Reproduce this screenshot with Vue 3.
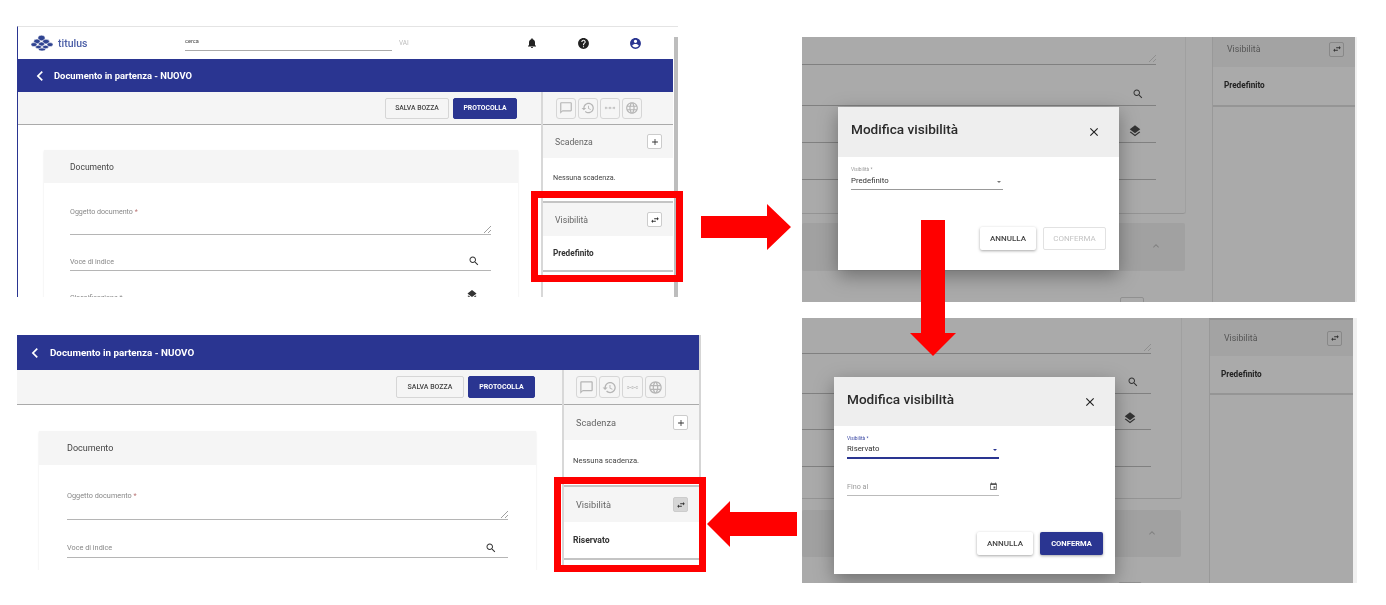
<template>
  <main class="slide">
    <!-- page screenshots, before and after -->
    <section v-for="s in appShots" :key="s.id" class="shot app" :class="s.id">
      <header v-if="s.topbar" class="topbar">
        <svg class="logo" viewBox="0 0 22 16" width="22" height="16" aria-hidden="true">
          <ellipse cx="10.5" cy="3" rx="3.6" ry="2.8" />
          <ellipse cx="6" cy="6.4" rx="3.2" ry="2.3" />
          <ellipse cx="15" cy="6.6" rx="3.4" ry="2.3" />
          <ellipse cx="3" cy="9.6" rx="3" ry="2" />
          <ellipse cx="10.5" cy="9" rx="3" ry="2" />
          <ellipse cx="19" cy="9.6" rx="3" ry="2" />
          <ellipse cx="7.5" cy="12" rx="3" ry="1.7" />
          <ellipse cx="14.5" cy="12" rx="3" ry="1.7" />
          <ellipse cx="11" cy="14.5" rx="3.4" ry="1.4" />
        </svg>
        <span class="brand">titulus</span>
        <div class="search">cerca</div>
        <span class="go">VAI</span>
        <div class="top-icons">
          <Icon name="bell" :size="12" />
          <Icon name="help" :size="13" />
          <Icon name="account" :size="13" class="blue" />
        </div>
      </header>

      <div class="title-bar">
        <Icon name="back" :size="20" />
        <span>Documento in partenza - NUOVO</span>
      </div>

      <div class="columns">
        <div class="content">
          <div class="toolbar">
            <button class="btn">SALVA BOZZA</button>
            <button class="btn primary">PROTOCOLLA</button>
          </div>
          <div class="card">
            <div class="card-head">Documento</div>
            <div class="field tall">
              <label>Oggetto documento <i>*</i></label>
              <svg class="grip" viewBox="0 0 8 8" width="8" height="8" aria-hidden="true">
                <path d="M1 8 8 1M5 8l3-3" />
              </svg>
            </div>
            <div class="field">
              <label>Voce di indice</label>
              <Icon name="search" :size="12" />
            </div>
            <div v-if="s.topbar" class="field clipped">
              <label>Classificazione *</label>
              <Icon name="layers" :size="12" />
            </div>
          </div>
        </div>

        <aside class="side">
          <div class="side-tools">
            <span v-for="t in sideTools" :key="t" class="tool"><Icon :name="t" :size="s.toolIcon" /></span>
          </div>
          <div class="acc-head">
            <span>Scadenza</span>
            <span class="mini"><Icon name="add" :size="10" /></span>
          </div>
          <div class="acc-body first">Nessuna scadenza.</div>
          <div class="acc-head">
            <span>Visibilità</span>
            <span class="mini" :class="{ pressed: s.pressed }"><Icon name="swap" :size="10" /></span>
          </div>
          <div class="acc-body value">{{ s.value }}</div>
        </aside>
      </div>
    </section>

    <!-- dialog screenshots -->
    <section v-for="s in dialogShots" :key="s.id" class="shot dim" :class="s.id">
      <div class="under">
        <div class="under-main">
          <div class="rows">
            <div class="row">
              <svg class="grip" viewBox="0 0 8 8" width="8" height="8" aria-hidden="true">
                <path d="M1 8 8 1M5 8l3-3" />
              </svg>
            </div>
            <div class="row"><Icon name="search" :size="12" /></div>
            <div class="row stack"><Icon name="layers" :size="14" /></div>
            <div class="row"></div>
          </div>
          <div class="under-head"><Icon name="up" :size="12" /></div>
          <span class="under-mini"></span>
        </div>
        <div class="under-side">
          <div class="acc-head">
            <span>Visibilità</span>
            <span class="mini"><Icon name="swap" :size="10" /></span>
          </div>
          <div class="acc-body value">Predefinito</div>
        </div>
      </div>

      <div class="modal">
        <div class="modal-head">
          <h2>Modifica visibilità</h2>
          <Icon name="close" :size="14" />
        </div>
        <div class="modal-body">
          <div class="select" :class="{ active: s.active }">
            <label>Visibilità *</label>
            <div class="select-value">
              <span>{{ s.value }}</span>
              <span class="caret"></span>
            </div>
          </div>
          <div v-if="s.active" class="date">
            <span>Fino al</span>
            <Icon name="event" :size="9" />
          </div>
        </div>
        <div class="modal-foot">
          <button class="flat">ANNULLA</button>
          <button class="flat" :class="s.active ? 'confirm' : 'off'">CONFERMA</button>
        </div>
      </div>
    </section>

    <!-- annotations drawn over the screenshots -->
    <div class="mark mark-a"></div>
    <div class="mark mark-d"></div>
    <svg class="arrow arrow-right" viewBox="0 0 90 46" width="90" height="46" aria-hidden="true">
      <polygon points="0,12 66,12 66,0 90,23 66,46 66,34 0,34" />
    </svg>
    <svg class="arrow arrow-down" viewBox="0 0 46 136" width="46" height="136" aria-hidden="true">
      <polygon points="11,0 35,0 35,113 46,113 23,136 0,113 11,113" />
    </svg>
    <svg class="arrow arrow-left" viewBox="0 0 90 46" width="90" height="46" aria-hidden="true">
      <polygon points="90,11 23,11 23,0 0,23 23,46 23,35 90,35" />
    </svg>
  </main>
</template>

<script setup>
import { h } from 'vue';

const icons = {
  bell: 'M12 22c1.1 0 2-.9 2-2h-4c0 1.1.9 2 2 2zm6-6v-5c0-3.07-1.63-5.64-4.5-6.32V4c0-.83-.67-1.5-1.5-1.5s-1.5.67-1.5 1.5v.68C7.64 5.36 6 7.92 6 11v5l-2 2v1h16v-1l-2-2z',
  help: 'M12 2C6.48 2 2 6.48 2 12s4.48 10 10 10 10-4.48 10-10S17.52 2 12 2zm1 17h-2v-2h2v2zm2.07-7.75l-.9.92C13.45 12.9 13 13.5 13 15h-2v-.5c0-1.1.45-2.1 1.17-2.83l1.24-1.26c.37-.36.59-.86.59-1.41 0-1.1-.9-2-2-2s-2 .9-2 2H8c0-2.21 1.79-4 4-4s4 1.79 4 4c0 .88-.36 1.68-.93 2.25z',
  account: 'M12 2C6.48 2 2 6.48 2 12s4.48 10 10 10 10-4.48 10-10S17.52 2 12 2zm0 3c1.66 0 3 1.34 3 3s-1.34 3-3 3-3-1.34-3-3 1.34-3 3-3zm0 14.2c-2.5 0-4.71-1.28-6-3.22.03-1.99 4-3.08 6-3.08 1.99 0 5.97 1.09 6 3.08-1.29 1.94-3.5 3.22-6 3.22z',
  back: 'M15.41 7.41L14 6l-6 6 6 6 1.41-1.41L10.83 12z',
  search: 'M15.5 14h-.79l-.28-.27C15.41 12.59 16 11.11 16 9.5 16 5.91 13.09 3 9.5 3S3 5.91 3 9.5 5.91 16 9.5 16c1.61 0 3.09-.59 4.23-1.57l.27.28v.79l5 4.99L20.49 19l-4.99-5zm-6 0C7.01 14 5 11.99 5 9.5S7.01 5 9.5 5 14 7.01 14 9.5 11.99 14 9.5 14z',
  layers: 'M11.99 18.54l-7.37-5.73L3 14.07l9 7 9-7-1.63-1.27-7.38 5.74zM12 16l7.36-5.73L21 9l-9-7-9 7 1.63 1.27L12 16z',
  close: 'M19 6.41L17.59 5 12 10.59 6.41 5 5 6.41 10.59 12 5 17.59 6.41 19 12 13.41 17.59 19 19 17.59 13.41 12z',
  up: 'M12 8l-6 6 1.41 1.41L12 10.83l4.59 4.58L18 14z',
  add: 'M19 13h-6v6h-2v-6H5v-2h6V5h2v6h6v2z',
  swap: 'M6.99 11L3 15l3.99 4v-3H14v-2H6.99v-3zM21 9l-3.99-4v3H10v2h7.01v3L21 9z',
  chat: 'M20 2H4c-1.1 0-2 .9-2 2v18l4-4h14c1.1 0 2-.9 2-2V4c0-1.1-.9-2-2-2zm0 14H6l-2 2V4h16v12z',
  history: 'M13 3c-4.97 0-9 4.03-9 9H1l3.89 3.89.07.14L9 12H6c0-3.87 3.13-7 7-7s7 3.13 7 7-3.13 7-7 7c-1.93 0-3.68-.79-4.94-2.06l-1.42 1.42C8.27 19.99 10.51 21 13 21c4.97 0 9-4.03 9-9s-4.03-9-9-9zm-1 5v5l4.28 2.54.72-1.21-3.5-2.08V8H12z',
  dots: 'M3 11.4h18v1.2H3zM5 10a2 2 0 1 0 0 4 2 2 0 0 0 0-4zm7 0a2 2 0 1 0 0 4 2 2 0 0 0 0-4zm7 0a2 2 0 1 0 0 4 2 2 0 0 0 0-4z',
  globe: 'M11.99 2C6.47 2 2 6.48 2 12s4.47 10 9.99 10C17.52 22 22 17.52 22 12S17.52 2 11.99 2zm6.93 6h-2.95c-.32-1.25-.78-2.45-1.38-3.56 1.84.63 3.37 1.91 4.33 3.56zM12 4.04c.83 1.2 1.48 2.53 1.91 3.96h-3.82c.43-1.43 1.08-2.76 1.91-3.96zM4.26 14C4.1 13.36 4 12.69 4 12s.1-1.36.26-2h3.38c-.08.66-.14 1.32-.14 2 0 .68.06 1.34.14 2H4.26zm.82 2h2.95c.32 1.25.78 2.45 1.38 3.56-1.84-.63-3.37-1.9-4.33-3.56zm2.95-8H5.08c.96-1.66 2.49-2.93 4.33-3.56C8.81 5.55 8.35 6.75 8.03 8zM12 19.96c-.83-1.2-1.48-2.53-1.91-3.96h3.82c-.43 1.43-1.08 2.76-1.91 3.96zM14.34 14H9.66c-.09-.66-.16-1.32-.16-2 0-.68.07-1.35.16-2h4.68c.09.65.16 1.32.16 2 0 .68-.07 1.34-.16 2zm.25 5.56c.6-1.11 1.06-2.31 1.38-3.56h2.95c-.96 1.65-2.49 2.93-4.33 3.56zM16.36 14c.08-.66.14-1.32.14-2 0-.68-.06-1.34-.14-2h3.38c.16.64.26 1.31.26 2s-.1 1.36-.26 2h-3.38z',
  event: 'M17 12h-5v5h5v-5zM16 1v2H8V1H6v2H5c-1.11 0-1.99.9-1.99 2L3 19c0 1.1.89 2 2 2h14c1.1 0 2-.9 2-2V5c0-1.1-.9-2-2-2h-1V1h-2zm3 18H5V8h14v11z'
};

const Icon = (props) =>
  h('svg', { viewBox: '0 0 24 24', width: props.size, height: props.size, fill: 'currentColor', 'aria-hidden': 'true' }, [
    h('path', { d: icons[props.name] })
  ]);
Icon.props = ['name', 'size'];

const sideTools = ['chat', 'history', 'dots', 'globe'];

const appShots = [
  { id: 'shot-a', topbar: true, value: 'Predefinito', pressed: false, toolIcon: 14 },
  { id: 'shot-d', topbar: false, value: 'Riservato', pressed: true, toolIcon: 15 }
];

const dialogShots = [
  { id: 'shot-b', value: 'Predefinito', active: false },
  { id: 'shot-c', value: 'Riservato', active: true }
];
</script>

<style scoped>
.slide {
  position: relative;
  width: 1386px;
  height: 605px;
  overflow: hidden;
  background: #fff;
  font-family: Roboto, "Liberation Sans", sans-serif;
  color: #333;
}

/* the pasted screenshots sit freely on the slide */
.shot {
  position: absolute;
  overflow: hidden;
  filter: blur(0.3px);
  box-sizing: border-box;
}

button {
  font-family: inherit;
  padding: 0;
  cursor: pointer;
}

label {
  display: block;
}

/* page screenshots */
.app {
  display: flex;
  flex-direction: column;
  background: #fff;
}

.shot-a {
  left: 17px;
  top: 26px;
  width: 661px;
  height: 271px;
  padding-right: 5px;
  border-top: 1px solid #e4e4e4;
  border-left: 1px solid #2a3591;
  --bar: 33px;
  --tool: 33px;
  --title: 9.4px;
  --title-gap: 4px;
  --title-pad: 12px;
  --content: 523px;
  --btn-h: 21px;
  --btn-a: 64px;
  --btn-b: 64px;
  --btn-font: 6.8px;
  --tools-right: 24px;
  --tool-w: 20px;
  --tool-h: 21px;
  --side-pad: 13px;
  --card-x: 26px;
  --card-y: 25px;
  --card-w: 474px;
  --head: 33px;
  --field-pad: 26px;
  --field-right: 27px;
  --f-top: 22px;
  --f-tall: 30px;
  --f-gap: 19px;
  --f-h: 17px;
  --acc-head: 33px;
  --acc-first: 45px;
  --acc-last: 36px;
  --body-pad: 10px;
  --label: 7.1px;
  --acc-title: 8.7px;
  --note: 7.2px;
  --bold: 8.2px;
}

.shot-a::after {
  content: "";
  position: absolute;
  right: 0;
  top: 10px;
  bottom: 0;
  width: 4px;
  background: #bdbdbd;
}

.shot-d {
  left: 17px;
  top: 335px;
  width: 684px;
  height: 235px;
  border-right: 2px solid #d5d5d5;
  --bar: 35px;
  --tool: 35px;
  --title: 9.8px;
  --title-gap: 5px;
  --title-pad: 8px;
  --content: 545px;
  --btn-h: 22px;
  --btn-a: 68px;
  --btn-b: 67px;
  --btn-font: 7px;
  --tools-right: 27px;
  --tool-w: 21px;
  --tool-h: 22px;
  --side-pad: 12px;
  --card-x: 22px;
  --card-y: 26px;
  --card-w: 497px;
  --head: 34px;
  --field-pad: 28px;
  --field-right: 28px;
  --f-top: 24px;
  --f-tall: 31px;
  --f-gap: 20px;
  --f-h: 18px;
  --acc-head: 35px;
  --acc-first: 47px;
  --acc-last: 38px;
  --body-pad: 9px;
  --label: 7.3px;
  --acc-title: 9.2px;
  --note: 7.6px;
  --bold: 8.6px;
}

.topbar {
  display: flex;
  align-items: center;
  flex: none;
  height: 32px;
  color: #222;
}

.logo {
  margin-left: 13px;
  fill: #2f4391;
  stroke: #fff;
  stroke-width: 0.5;
}

.brand {
  margin-left: 5px;
  width: 127px;
  font-size: 10.5px;
  font-weight: 500;
  color: #4a5da6;
}

.search {
  box-sizing: border-box;
  width: 207px;
  height: 15px;
  border-bottom: 1.5px solid #aaa;
  font-size: 5.6px;
  line-height: 11px;
  color: #444;
}

.go {
  margin-left: 7px;
  font-size: 6.4px;
  color: #bbb;
}

.top-icons {
  display: flex;
  align-items: center;
  justify-content: space-between;
  width: 116px;
  margin-left: 117px;
}

.blue {
  color: #2a3591;
}

.title-bar {
  display: flex;
  align-items: center;
  gap: var(--title-gap);
  flex: none;
  height: var(--bar);
  padding-left: var(--title-pad);
  background: #2a3591;
  color: #fff;
  font-size: var(--title);
  font-weight: 700;
}

.columns {
  display: flex;
  flex: 1;
  min-height: 0;
}

.content {
  flex: none;
  width: var(--content);
}

.toolbar {
  display: flex;
  align-items: center;
  justify-content: flex-end;
  gap: 4px;
  box-sizing: border-box;
  height: var(--tool);
  padding-right: var(--tools-right);
  background: #f5f5f5;
  border-bottom: 1px solid #aaa;
}

.btn {
  width: var(--btn-a);
  height: var(--btn-h);
  border: 1px solid #d6d6d6;
  border-radius: 2px;
  background: #f5f5f5;
  color: #444;
  font-size: var(--btn-font);
  font-weight: 500;
}

.btn.primary {
  width: var(--btn-b);
  border-color: #2a3591;
  background: #2a3591;
  color: #fff;
  font-weight: 700;
}

.card {
  width: var(--card-w);
  margin: var(--card-y) 0 0 var(--card-x);
  box-shadow: 0 1px 2px rgba(0, 0, 0, 0.1);
  padding-bottom: 40px;
}

.card-head {
  display: flex;
  align-items: center;
  height: var(--head);
  padding-left: var(--field-pad);
  background: #f5f5f5;
  font-size: calc(var(--acc-title) - 0.2px);
  color: #444;
}

.field {
  position: relative;
  display: flex;
  align-items: center;
  justify-content: space-between;
  box-sizing: border-box;
  height: var(--f-h);
  padding-bottom: 2px;
  margin: var(--f-gap) var(--field-right) 0 var(--field-pad);
  border-bottom: 1.5px solid #b5b5b5;
  font-size: var(--label);
  color: #888;
}

.field.tall {
  height: var(--f-tall);
  margin-top: var(--f-top);
  padding: 2px 0 0;
  align-items: flex-start;
}

.field.clipped svg {
  margin-top: -5px;
  margin-right: 13px;
}

.field i {
  font-style: normal;
  color: #b77;
}

.field svg {
  color: #333;
  margin-right: 11px;
}

.grip {
  position: absolute;
  right: 0;
  bottom: 1px;
  margin: 0 !important;
  fill: none;
  stroke: #888;
  stroke-width: 0.8;
}

.side {
  flex: 1;
  min-width: 0;
  border-left: 2px solid #d8d8d8;
}

.side-tools {
  display: flex;
  align-items: center;
  gap: 2px;
  box-sizing: border-box;
  height: var(--tool);
  padding-left: var(--side-pad);
  background: #f5f5f5;
  border-bottom: 1px solid #aaa;
}

.tool {
  display: flex;
  align-items: center;
  justify-content: center;
  width: var(--tool-w);
  height: var(--tool-h);
  border: 1px solid #d6d6d6;
  border-radius: 3px;
  box-sizing: border-box;
  color: #b5b5b5;
}

.acc-head {
  display: flex;
  align-items: center;
  justify-content: space-between;
  height: var(--acc-head);
  padding: 0 11px 0 12px;
  background: #f5f5f5;
  font-size: var(--acc-title);
  color: #666;
}

.mini {
  display: flex;
  align-items: center;
  justify-content: center;
  box-sizing: border-box;
  width: 15px;
  height: 15px;
  border: 1px solid #ccc;
  border-radius: 2px;
  background: #fff;
  color: #333;
}

.mini.pressed {
  background: #d6d6d6;
}

.acc-body {
  display: flex;
  align-items: center;
  box-sizing: border-box;
  padding-left: var(--body-pad);
}

.acc-body.first {
  height: var(--acc-first);
  padding-bottom: 5px;
  font-size: var(--note);
  color: #444;
  border-bottom: 2px solid #c4c4c4;
}

.acc-body.value {
  height: var(--acc-last);
  font-size: var(--bold);
  font-weight: 700;
  color: #333;
  border-bottom: 2px solid #c4c4c4;
}

/* dialog screenshots */
.dim {
  background: #f0f0f0;
  color: #333;
}

.shot-b {
  left: 802px;
  top: 37px;
  width: 555px;
  height: 265px;
  --rows: 28px 41px 37px 37px;
  --card-tail: 33px;
  --card-right: 27px;
  --row-right: 29px;
  --under-gap: 9px;
  --under-h: 48px;
  --mini-x: 318px;
  --mini-y: 5px;
  --main-w: 410px;
  --side-w: 142px;
  --side-top: 30px;
  --side-body: 40px;
  --side-lift: 6px;
  --modal-x: 36px;
  --modal-y: 70px;
  --modal-h: 163px;
  --modal-head: 50px;
  --foot-right: 13px;
  --foot-bottom: 20px;
}

.shot-c {
  left: 802px;
  top: 318px;
  width: 555px;
  height: 265px;
  --rows: 36px 40px 36px 37px;
  --card-tail: 31px;
  --card-right: 28px;
  --row-right: 30px;
  --under-gap: 11px;
  --under-h: 47px;
  --mini-x: 316px;
  --mini-y: 1px;
  --main-w: 407px;
  --side-w: 143px;
  --side-top: 36px;
  --side-body: 39px;
  --side-lift: 0px;
  --modal-x: 32px;
  --modal-y: 59px;
  --modal-h: 197px;
  --modal-head: 49px;
  --foot-right: 12px;
  --foot-bottom: 19px;
}

.under {
  display: flex;
  width: fit-content;
  height: 100%;
  background: #aaa;
}

.under-main {
  position: relative;
  flex: none;
  width: var(--main-w);
}

.rows {
  display: grid;
  grid-template-rows: var(--rows);
  box-sizing: border-box;
  width: calc(100% - var(--card-right));
  padding-right: var(--row-right);
  padding-bottom: var(--card-tail);
  border-bottom: 1px solid #949494;
  border-radius: 0 0 2px 0;
  box-shadow: 1px 0 0 #a0a0a0;
}

.row {
  position: relative;
  display: flex;
  align-items: flex-end;
  justify-content: flex-end;
  padding: 0 12px 5px 0;
  border-bottom: 1.5px solid #808080;
  color: #333;
}

.row.stack {
  padding: 0 14px 4px 0;
}

.row .grip {
  bottom: 2px;
}

.under-head {
  display: flex;
  align-items: center;
  justify-content: flex-end;
  box-sizing: border-box;
  width: calc(100% - var(--card-right));
  height: var(--under-h);
  margin-top: var(--under-gap);
  padding: 0 23px 2px 0;
  background: #a1a1a1;
  border-radius: 2px;
  color: #808080;
}

.under-mini {
  position: absolute;
  left: var(--mini-x);
  top: calc(100% - var(--mini-y));
  width: 22px;
  height: 22px;
  border: 1px solid #909090;
  border-radius: 2px;
}

.under-side {
  flex: none;
  width: var(--side-w);
  height: 100%;
  border-left: 1px solid #999;
}

.under-side .acc-head {
  height: var(--side-top);
  padding: 0 11px var(--side-lift) 14px;
  box-sizing: border-box;
  background: #a3a3a3;
  color: #555;
  font-size: 8.8px;
}

.shot-c .under-side {
  border-top: 2px solid #959595;
}

.under-side .mini {
  background: transparent;
  border-color: #888;
}

.under-side .acc-body.value {
  height: var(--side-body);
  padding: 0 0 2px 11px;
  font-size: 8.2px;
  color: #222;
  border-bottom: 2px solid #959595;
}

.modal {
  position: absolute;
  left: var(--modal-x);
  top: var(--modal-y);
  display: flex;
  flex-direction: column;
  width: 281px;
  height: var(--modal-h);
  background: #fff;
  box-shadow: 0 6px 18px rgba(0, 0, 0, 0.35);
}

.modal-head {
  display: flex;
  align-items: center;
  justify-content: space-between;
  flex: none;
  box-sizing: border-box;
  height: var(--modal-head);
  padding: 0 18px 0 13px;
  background: #eee;
  color: #222;
}

.modal-head h2 {
  margin: 0 0 6px;
  font-size: 13.6px;
  font-weight: 500;
  color: #2a2a2a;
}

.modal-body {
  flex: 1;
  padding: 9px 0 0 13px;
}

.select {
  width: 152px;
  border-bottom: 1px solid #999;
}

.select label {
  font-size: 4.8px;
  line-height: 7px;
  color: #999;
}

.select-value {
  display: flex;
  align-items: flex-start;
  justify-content: space-between;
  box-sizing: border-box;
  height: 16px;
  padding: 3px 2px 0 0;
  font-size: 7.8px;
  color: #333;
}

.caret {
  width: 0;
  height: 0;
  margin-top: 5px;
  border: 2.5px solid transparent;
  border-top: 2.5px solid #777;
}

.select.active {
  border-bottom: 2px solid #2a3591;
  margin-bottom: -1px;
}

.select.active .select-value {
  height: 15px;
  padding-top: 2px;
}

.select.active label {
  color: #3c4aa5;
}

.select.active .caret {
  border-top-color: #2a3591;
}

.date {
  display: flex;
  align-items: center;
  justify-content: space-between;
  box-sizing: border-box;
  width: 152px;
  height: 15px;
  margin-top: 23px;
  padding: 0 1px 3px 0;
  border-bottom: 1.5px solid #bbb;
  font-size: 7.2px;
  color: #999;
}

.date svg {
  color: #555;
}

.modal-foot {
  display: flex;
  justify-content: flex-end;
  gap: 7px;
  flex: none;
  padding: 0 var(--foot-right) var(--foot-bottom) 0;
}

.flat {
  width: 56px;
  height: 23px;
  border: 0;
  border-radius: 2px;
  background: #fff;
  color: #444;
  font-size: 8px;
  font-weight: 500;
  box-shadow: 0 1px 3px rgba(0, 0, 0, 0.35);
}

.flat.off {
  width: 63px;
  border: 1px solid #e2e2e2;
  color: #c4c4c4;
  font-weight: 400;
  box-shadow: none;
}

.flat.confirm {
  width: 63px;
  background: #2a3591;
  color: #fff;
  font-weight: 700;
  font-size: 7.6px;
}

/* red annotations */
.mark {
  position: absolute;
  box-sizing: border-box;
  width: 152px;
  border: 7px solid #f00;
}

.mark-a {
  left: 531px;
  top: 191px;
  height: 91px;
}

.mark-d {
  left: 554px;
  top: 477px;
  height: 95px;
}

.arrow {
  position: absolute;
  fill: #f00;
}

.arrow-right {
  left: 701px;
  top: 204px;
}

.arrow-down {
  left: 910px;
  top: 220px;
}

.arrow-left {
  left: 707px;
  top: 501px;
}
</style>
